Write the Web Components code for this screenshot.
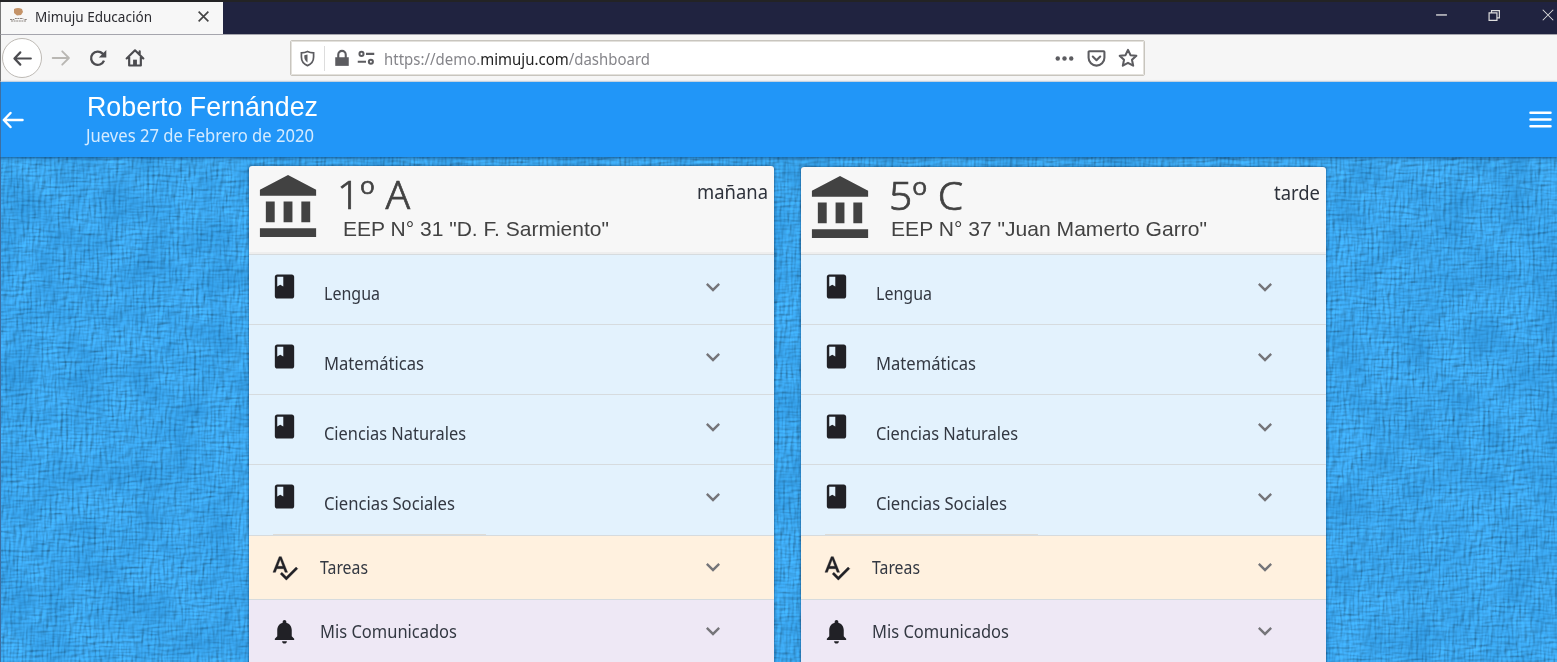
<!DOCTYPE html>
<html lang="es">
<head>
<meta charset="utf-8">
<title>Mimuju Educación</title>
<style>
html,body{margin:0;height:100%;overflow:hidden}
body{font-family:"Noto Sans","Open Sans",sans-serif;color:#333842}
</style>
</head>
<body>
<mimuju-window></mimuju-window>
<script>
const define=(name,html,after)=>customElements.define(name,class extends HTMLElement{
  connectedCallback(){
    if(this.shadowRoot)return;
    this.attachShadow({mode:'open'}).innerHTML=typeof html==='function'?html(this):html;
    if(after)after(this);
  }
});

const icons={
  bank:'<path d="M4 10v7h3v-7H4zm6 0v7h3v-7h-3zM2 22h19v-3H2v3zm14-12v7h3v-7h-3zm-4.5-9L2 6v2h19V6l-9.5-5z"/>',
  book:'<path d="M18 2H6c-1.1 0-2 .9-2 2v16c0 1.1.9 2 2 2h12c1.1 0 2-.9 2-2V4c0-1.1-.9-2-2-2zM6 4h5v8l-2.5-1.5L6 12V4z"/>',
  spell:'<path d="M12.45 16h2.09L9.43 3H7.57L2.46 16h2.09l1.12-3h5.64l1.14 3zm-6.02-5L8.5 5.48 10.57 11H6.43zm15.16.59l-8.09 8.09L9.83 16l-1.41 1.41 5.09 5.09L23 13l-1.41-1.41z" stroke="currentColor" stroke-width=".3"/>',
  bell:'<path d="M12 22c1.1 0 2-.9 2-2h-4c0 1.1.89 2 2 2zm6-6v-5c0-3.07-1.64-5.64-4.5-6.32V4c0-.83-.67-1.5-1.5-1.5s-1.5.67-1.5 1.5v.68C7.63 5.36 6 7.92 6 11v5l-2 2v1h16v-1l-2-2z"/>',
  chevron:'<path d="M16.59 8.59L12 13.17 7.41 8.59 6 10l6 6 6-6z"/>',
  back:'<g fill="none" stroke="currentColor" stroke-width="2.5" stroke-linecap="round" stroke-linejoin="round"><path d="M21.500 12H3M9.500 5L2.800 12l6.700 7"/></g>',
  forward:'<g fill="none" stroke="currentColor" stroke-width="2.2" stroke-linecap="round" stroke-linejoin="round"><path d="M2 12h19M13.500 4L21.500 12l-8 8"/></g>',
  reload:'<path d="M19.2 15.2A8 8 0 1 1 17.6 6.8L20 9" fill="none" stroke="currentColor" stroke-width="2.8"/><path d="M22 2.5v9h-9z"/>',
  home:'<path d="M2 12.5L12 2.8l10 9.7M5 11v10h14V11M17.6 4v4" fill="none" stroke="currentColor" stroke-width="2.6" stroke-linecap="round" stroke-linejoin="round"/><path d="M9.7 21v-7h4.6v7z"/>',
  shield:'<path d="M12 2.2C15 3.7 18 4 20.6 4v6c0 6-3.4 10-8.6 12-5.200-2-8.600-6-8.600-12V4C6 4 9 3.700 12 2.200z" fill="none" stroke="currentColor" stroke-width="2.4"/><path d="M12 6.500v11c-3-1.700-4.500-4.500-4.500-8V7.500z"/>',
  lock:'<path d="M3 11h18v11.500h-18z"/><path d="M7 12V7.500a5 5 0 0 1 10 0v4.500" fill="none" stroke="currentColor" stroke-width="2.800"/>',
  perms:'<g fill="none" stroke="currentColor" stroke-width="2.700"><circle cx="6" cy="6.500" r="2.700"/><path d="M12 6.500h11M1 17h11"/><circle cx="18.500" cy="17" r="2.700"/></g>',
  dots:'<circle cx="3.500" cy="12" r="2.800"/><circle cx="12" cy="12" r="2.800"/><circle cx="20.500" cy="12" r="2.800"/>',
  pocket:'<g fill="none" stroke="currentColor" stroke-width="2.600" stroke-linecap="round" stroke-linejoin="round"><path d="M3 2.800h18a1 1 0 0 1 1 1V11a10 10 0 0 1-20 0V3.800a1 1 0 0 1 1-1z"/><path d="M7.300 9.500l4.700 4.600 4.700-4.600"/></g>',
  star:'<path d="M12 2.200l3 6.400 7 .8-5.200 4.800 1.400 7L12 17.800 5.800 21.200l1.400-7L2 9.400l7-.8z" fill="none" stroke="currentColor" stroke-width="2.500" stroke-linejoin="round"/>',
  close:'<path d="M3 3l18 18M21 3l-18 18" stroke="currentColor" stroke-width="var(--sw,3)"/>',
  minimize:'<path d="M2 11h20" stroke="currentColor" stroke-width="2.500"/>',
  restore:'<g fill="none" stroke="currentColor" stroke-width="2.200"><path d="M2 7h14.500v14H2zM6.500 7V3H21v13.500h-4"/></g>',
  menu:'<path d="M1.500 5h21M1.500 12h21M1.500 19h21" stroke="currentColor" stroke-width="2.500" stroke-linecap="round"/>'
};
define('ui-icon',el=>`<style>:host{display:block;flex:none;width:${el.getAttribute('size')}px;height:${el.getAttribute('size')}px}svg{display:block;width:100%;height:100%;overflow:visible}</style><svg viewBox="0 0 24 24" fill="currentColor">${icons[el.getAttribute('name')]}</svg>`);

/* One line of text condensed or widened to the width given in its "w" attribute. */
define('fit-text','<style>:host{display:block;flex:none;white-space:nowrap}span{display:inline-block;transform-origin:0 50%}</style><span><slot></slot></span>',el=>{
  const s=el.shadowRoot.querySelector('span'),w=+el.getAttribute('w');
  const n=s.getBoundingClientRect().width;
  el.style.width=w+'px';
  if(n)s.style.transform=`scaleX(${w/n})`;
});

define('browser-tabs',`<style>
:host{display:flex;height:34px;box-sizing:border-box;border-top:2px solid #232325;background:#202340;color:#ddd}
.tab{width:223px;box-sizing:border-box;border-left:1px solid #777;background:#f7f7f7;display:flex;align-items:center;color:#2b2b30;height:32px;padding:0 13px 3px 9px}
.logo{width:18px;height:16px;margin:-3px 7px 0 0;flex:none}
fit-text{font-size:14.500px;line-height:20px;height:20px;margin-top:-2px}
.tab ui-icon{margin-left:auto;color:#444}
.ctl{margin-left:auto;display:flex;align-items:center;gap:40px;height:26px}
.ctl ui-icon{--sw:1.800}
</style><div class="tab"><svg class="logo" viewBox="0 0 18 16"><path d="M4 2q4-2 8 0l1 3-2 3-4 .5L4 6z" fill="#c49368"/><path d="M0 12.500h4l1-1h8l1 1h3M1 14h15" stroke="#8c8580" stroke-width="1" fill="none" stroke-dasharray="2 .6"/></svg><fit-text w="117">Mimuju Educación</fit-text><ui-icon name="close" size="13"></ui-icon></div>
<div class="ctl"><ui-icon name="minimize" size="13"></ui-icon><ui-icon name="restore" size="13"></ui-icon><ui-icon name="close" size="14" style="margin-right:2px"></ui-icon></div>`);

define('browser-toolbar',`<style>
:host{display:flex;align-items:center;height:48px;box-sizing:border-box;background:#f6f6f6;border-top:1px solid #a5a5ad;border-bottom:1px solid #dce8f2;border-left:1px solid #777;color:#4c4c50;padding:0 0 0 1px}
.back{width:40px;height:40px;box-sizing:border-box;border:1px solid #bebab5;border-radius:50%;background:#fff;display:grid;place-items:center;flex:none}
.url{box-sizing:border-box;width:855px;height:36px;margin-left:145px;border:1px solid #c8c5be;outline:1px solid #e3e1dc;outline-offset:-2px;border-radius:2px;background:#fff;display:flex;align-items:center;padding:0 6px 0 8px;color:#5c5c60}
.sep{width:1px;height:25px;background:#ddd;margin:0 8px 0 8px}
fit-text{font-size:15.500px;line-height:22px;color:#85858a;margin:2px 0 0 9px}
b{font-weight:400;color:#222}
</style><div class="back"><ui-icon name="back" size="21"></ui-icon></div>
<ui-icon name="forward" size="20" style="margin-left:9px;color:#b9b7b3"></ui-icon>
<ui-icon name="reload" size="20" style="margin-left:17px"></ui-icon>
<ui-icon name="home" size="20" style="margin-left:17px"></ui-icon>
<div class="url"><ui-icon name="shield" size="17"></ui-icon><i class="sep"></i><ui-icon name="lock" size="18"></ui-icon><ui-icon name="perms" size="18" style="margin-left:6px"></ui-icon><fit-text w="266">https://demo.<b>mimuju.com</b>/dashboard</fit-text>
<ui-icon name="dots" size="19" style="margin-left:auto"></ui-icon><ui-icon name="pocket" size="19" style="margin-left:13px"></ui-icon><ui-icon name="star" size="20" style="margin-left:12px"></ui-icon></div>`);

define('app-header',`<style>
:host{display:flex;height:75px;background:#2196f8;color:#fff;position:relative;z-index:1;box-shadow:0 1px 3px rgba(0,45,90,.65);box-sizing:border-box;border-left:1px solid #3d6fa3;align-items:center}
.who{margin-left:61px;margin-top:-1px}
.name{font:27.500px/32px "Liberation Sans",sans-serif;height:32px;margin-left:1px}
.date{font-size:17.500px;line-height:24px;height:24px;color:#d4ebff}
</style><ui-icon name="back" size="24"></ui-icon><div class="who"><fit-text class="name" w="231">Roberto Fernández</fit-text><fit-text class="date" w="228">Jueves 27 de Febrero de 2020</fit-text></div><ui-icon name="menu" size="23" style="margin:0 5px 0 auto"></ui-icon>`);

define('fabric-backdrop',`<style>:host,svg{display:block;width:100%;height:100%}</style>
<svg><defs><filter id="weave" x="0" y="0" width="100%" height="100%" color-interpolation-filters="sRGB">
<feTurbulence type="fractalNoise" baseFrequency=".36 .06" numOctaves="2" seed="4" result="v"/>
<feTurbulence type="fractalNoise" baseFrequency=".06 .36" numOctaves="2" seed="9" result="h"/>
<feComposite in="v" in2="h" operator="arithmetic" k2=".5" k3=".5" result="m"/>
<feDiffuseLighting in="m" surfaceScale="1.500" diffuseConstant="1.130" lighting-color="#3fabf3" result="cloth"><feDistantLight azimuth="225" elevation="60"/></feDiffuseLighting>
<feTurbulence type="fractalNoise" baseFrequency=".03" numOctaves="3" seed="3"/>
<feColorMatrix values="0 0 0 0 .1  0 0 0 0 .48  0 0 0 0 .76  .7 0 0 0 -.24" result="shade"/>
<feMerge><feMergeNode in="cloth"/><feMergeNode in="shade"/></feMerge>
</filter></defs><rect width="100%" height="100%" fill="#3ca7f2" filter="url(#weave)"/></svg>`);

define('class-row',el=>`<style>
:host{display:flex;height:${el.getAttribute('h')}px;box-sizing:border-box;border-top:1px solid #d6dbde;padding:0 46.500px 0 21px;background:var(--row,#e3f2fd)}
.label{font-size:17.500px;line-height:24px}
.ico{color:#212126}
.chev{margin-left:auto;color:#757579}
:host(.subject) .ico{margin-top:17px}
:host(.subject) .label{margin:26px 0 0 25px}
:host(.subject) .chev{margin-top:17.500px}
:host(.extra){align-items:center;padding-bottom:1px;--row:#fff1df}
:host(.extra) .label{margin:-1px 0 0 21px}
:host(.notice){--row:#eee8f5;padding-bottom:2px}
</style><ui-icon class="ico" name="${el.getAttribute('icon')}" size="29"></ui-icon><fit-text class="label" w="${el.getAttribute('w')}">${el.getAttribute('label')}</fit-text><ui-icon class="chev" name="chevron" size="28"></ui-icon>`);

define('class-card',el=>`<style>
:host{display:block;width:525px;flex:none;border-radius:3px 3px 0 0;overflow:hidden;box-shadow:0 0 3px rgba(0,40,80,.75);background:#f7f7f7}
header{display:flex;height:var(--head);box-sizing:border-box;padding:6px 6px 0 5px;border-bottom:2px solid #eee;color:#424242}
.titles{margin:-1px 0 0 var(--gap)}
.grade{font-size:39px;line-height:46px;height:46px;font-weight:300;-webkit-text-stroke:.7px #424242}
.school{font:21px/24px "Liberation Sans",sans-serif;height:24px;margin:var(--drop) 0 0 var(--indent)}
.turn{margin:6px 0 0 auto;font-size:19.500px;line-height:28px;color:#2e323b}
.stub{height:1px;width:213px;margin:-1px 0 0 24px;background:#dddcd8;position:relative}
</style><header><ui-icon name="bank" size="71"></ui-icon><div class="titles"><fit-text class="grade" w="${el.getAttribute('gw')}">${el.getAttribute('grade')}</fit-text><fit-text class="school" w="${el.getAttribute('sw')}"><slot></slot></fit-text></div><fit-text class="turn" w="${el.getAttribute('tw')}">${el.getAttribute('turn')}</fit-text></header>
<class-row class="subject" h="70" icon="book" label="Lengua" w="56"></class-row>
<class-row class="subject" h="70" icon="book" label="Matemáticas" w="100"></class-row>
<class-row class="subject" h="70" icon="book" label="Ciencias Naturales" w="142"></class-row>
<class-row class="subject" h="71" icon="book" label="Ciencias Sociales" w="131"></class-row><div class="stub"></div>
<class-row class="extra" h="64" icon="spell" label="Tareas" w="48"></class-row>
<class-row class="extra notice" h="65" icon="bell" label="Mis Comunicados" w="137"></class-row>`);

define('mimuju-window',`<style>
:host{display:flex;flex-direction:column;width:1557px;height:662px;overflow:hidden}
main{flex:1;min-height:0;display:grid;border-left:1px solid #3d6fa3}
main>*{grid-area:1/1;min-height:0}
.cards{display:flex;gap:27px;padding:9px 0 0 247.500px;z-index:0;overflow:hidden;align-items:flex-start}
.one{--head:88px;--gap:12px;--indent:6px;--drop:0}
.two{--head:87px;--gap:12px;--indent:2px;--drop:-1px;margin-top:1px}
</style><browser-tabs></browser-tabs><browser-toolbar></browser-toolbar><app-header></app-header>
<main><fabric-backdrop></fabric-backdrop><div class="cards">
<class-card class="one" grade="1º A" gw="73" sw="266" turn="mañana" tw="71">EEP N° 31 "D. F. Sarmiento"</class-card>
<class-card class="two" grade="5º C" gw="74" sw="316" turn="tarde" tw="46">EEP N° 37 "Juan Mamerto Garro"</class-card>
</div></main>`);
</script>
</body>
</html>
